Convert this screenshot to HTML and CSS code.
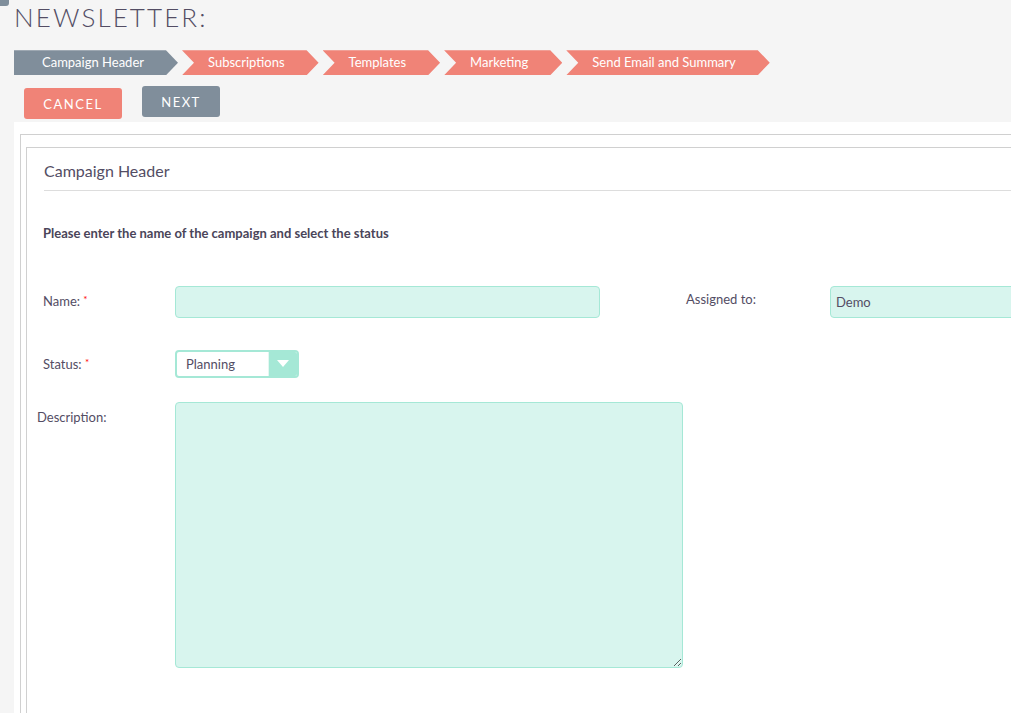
FILE: index.html
```html
<!DOCTYPE html>
<html lang="en">
    <head>
        <meta charset="UTF-8">
        <meta name="viewport" content="width=device-width, initial-scale=1.0">
        <title>Newsletter - Campaign Header</title>
        <link rel="stylesheet" href="styles.css">
    </head>
    <body>
        <div class="corner-tab"></div>

        <h1 class="module-title">NEWSLETTER:</h1>

        <div class="wizard-steps">
            <div class="step step-first active">Campaign Header</div>
            <div class="step">Subscriptions</div>
            <div class="step">Templates</div>
            <div class="step">Marketing</div>
            <div class="step">Send Email and Summary</div>
        </div>

        <div class="actions">
            <button type="button" class="btn btn-cancel">CANCEL</button>
            <button type="button" class="btn btn-next">NEXT</button>
        </div>

        <div class="panel">
            <div class="box-outer">
                <div class="box-inner">
                    <h2 class="box-title">Campaign Header</h2>
                    <p class="intro">Please enter the name of the campaign and select the status</p>

                    <form class="campaign-form">
                        <div class="form-row">
                            <label class="field-label" for="name">Name: <span class="required">*</span></label>
                            <input type="text" class="field-input field-name" id="name">
                            <label class="field-label label-assigned" for="assigned">Assigned to:</label>
                            <input type="text" class="field-input field-assigned" id="assigned" value="Demo">
                        </div>

                        <div class="form-row row-status">
                            <label class="field-label" for="status">Status: <span class="required">*</span></label>
                            <div class="select-box">
                                <select id="status" class="select-native">
                                    <option>Planning</option>
                                    <option>Active</option>
                                    <option>Inactive</option>
                                </select>
                                <span class="select-arrow">
                                    <svg width="12" height="8" viewBox="0 0 12 8"><path d="M0 0 L12 0 L6 7 Z" fill="#ffffff"/></svg>
                                </span>
                            </div>
                        </div>

                        <div class="form-row row-description">
                            <label class="field-label label-description" for="description">Description:</label>
                            <textarea id="description" class="field-textarea"></textarea>
                        </div>
                    </form>
                </div>
            </div>
        </div>
    </body>
</html>
```

FILE: styles.css
```css
/* Newsletter wizard - campaign header step */
html, body {
    overflow: hidden;
}
body {
    margin: 0;
    background-color: #f5f5f5;
    font-family: Lato, "Open Sans", sans-serif;
    color: #534d64;
}
.corner-tab {
    position: absolute;
    top: 0;
    left: 0;
    width: 9px;
    height: 6px;
    background-color: #7f8e9b;
    border-bottom-right-radius: 3px;
}
.module-title {
    margin: 0;
    padding: 2px 0 0 14px;
    font-size: 26px;
    font-weight: 300;
    letter-spacing: 2.1px;
    line-height: 1.2;
    color: #534d64;
}
.wizard-steps {
    display: flex;
    gap: 4px;
    margin: 17px 0 0 14px;
}
.step {
    height: 25px;
    line-height: 25px;
    padding: 0 34px 0 26px;
    font-size: 13px;
    color: #ffffff;
    background-color: #f08377;
    white-space: nowrap;
    clip-path: polygon(0 0, calc(100% - 12px) 0, 100% 50%, calc(100% - 12px) 100%, 0 100%, 12px 50%);
}
.step-first {
    padding-left: 28px;
    clip-path: polygon(0 0, calc(100% - 12px) 0, 100% 50%, calc(100% - 12px) 100%, 0 100%);
}
.step.active {
    background-color: #808e9b;
}
.actions {
    display: flex;
    align-items: flex-start;
    gap: 20px;
    height: 36px;
    margin: 11px 0 0 24px;
}
.btn {
    border: none;
    border-radius: 3px;
    font-family: Lato, "Open Sans", sans-serif;
    font-size: 13px;
    letter-spacing: 1.5px;
    color: #ffffff;
    height: 31px;
    padding: 0;
}
.btn-cancel {
    width: 98px;
    margin-top: 2px;
    background-color: #f08377;
}
.btn-next {
    width: 78px;
    background-color: #808e9b;
}
.panel {
    margin-left: 14px;
    padding: 12px 0 0 6px;
    background-color: #ffffff;
    min-height: 600px;
}
.box-outer {
    border-top: 1px solid #d0d0d0;
    border-left: 1px solid #d0d0d0;
    padding: 12px 0 0 5px;
}
.box-inner {
    border-top: 1px solid #d0d0d0;
    border-left: 1px solid #d0d0d0;
    padding: 13px 0 60px 17px;
}
.box-title {
    margin: 0;
    padding-bottom: 10px;
    font-size: 16px;
    font-weight: 400;
    line-height: 1.2;
    border-bottom: 1px solid #dddddd;
}
.intro {
    margin: 34px 0 0 -1px;
    font-size: 13px;
    font-weight: 700;
    line-height: 16px;
    color: #4a4559;
}
.campaign-form {
    margin: 45px 0 0 -1px;
}
.form-row {
    display: flex;
    align-items: flex-start;
}
.field-label {
    width: 132px;
    flex-shrink: 0;
    padding-top: 5px;
    font-size: 13px;
    line-height: 16px;
}
.required {
    color: #ff0000;
    font-size: 10px;
    vertical-align: 3px;
}
.field-input {
    box-sizing: border-box;
    height: 32px;
    flex-shrink: 0;
    padding: 0 5px;
    border: 1px solid #a5e8d6;
    border-radius: 4px;
    background-color: #d8f5ee;
    font-family: Lato, "Open Sans", sans-serif;
    font-size: 13px;
    color: #534d64;
}
.field-name {
    width: 425px;
}
.label-assigned {
    width: 144px;
    margin-left: 86px;
}
.field-assigned {
    width: 260px;
}
.row-status {
    margin-top: 32px;
}
.row-status .field-label {
    padding-top: 4px;
}
.select-box {
    display: flex;
    box-sizing: border-box;
    width: 124px;
    height: 28px;
    border: 2px solid #a5e8d6;
    border-radius: 4px;
    background-color: #ffffff;
    overflow: hidden;
}
.select-native {
    flex: 1;
    min-width: 0;
    border: none;
    outline: none;
    padding: 0 0 0 9px;
    background: transparent;
    -webkit-appearance: none;
    appearance: none;
    font-family: Lato, "Open Sans", sans-serif;
    font-size: 13px;
    color: #534d64;
}
.select-arrow {
    display: flex;
    align-items: center;
    justify-content: center;
    width: 28px;
    border-left: 1px solid #e4f7f1;
    background-color: #a5e8d6;
}
.row-description {
    margin-top: 24px;
}
.label-description {
    width: 138px;
    margin-left: -6px;
    padding-top: 7px;
}
.field-textarea {
    box-sizing: border-box;
    width: 508px;
    height: 266px;
    border: 1px solid #a5e8d6;
    border-radius: 4px;
    background-color: #d8f5ee;
    font-family: Lato, "Open Sans", sans-serif;
    font-size: 13px;
}
```
